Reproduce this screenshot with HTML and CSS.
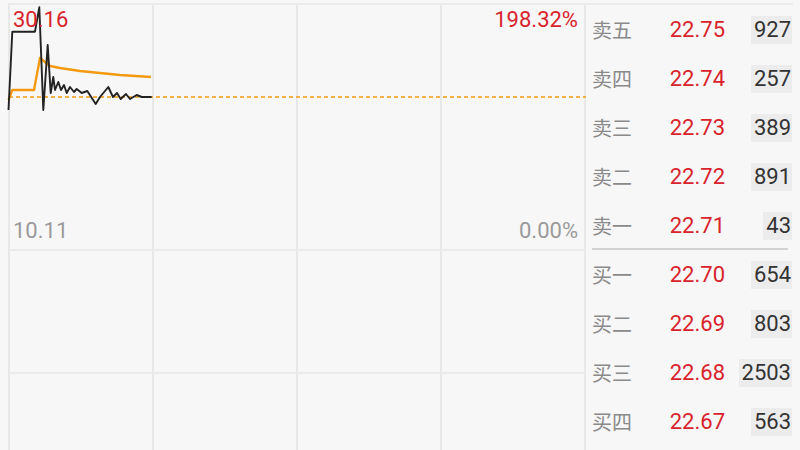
FILE: index.html
```html
<!DOCTYPE html>
<html lang="zh">
<head>
<meta charset="utf-8">
<link rel="stylesheet" href="styles.css">
</head>
<body>
<div class="page">
  <div class="chart">
    <div class="grid">
      <div class="cell price"></div><div class="cell price"></div><div class="cell price"></div><div class="cell price"></div>
      <div class="cell"></div><div class="cell"></div><div class="cell"></div><div class="cell"></div>
      <div class="cell"></div><div class="cell"></div><div class="cell"></div><div class="cell"></div>
    </div>
    <svg class="lines" width="586" height="450" viewBox="0 0 586 450">
      <path class="avg-ref" d="M9,97 H586"/>
      <path class="avg" d="M8.5,100 L12.3,90 L34,90 L40,58 L45,62 L50,66 L60,68 L80,71 L100,73 L120,75 L151,77"/>
      <path class="price-line" d="M8.5,110 L12.3,31.7 L35,31.7 L39.3,7.3 L43.3,110 L47.7,45 L50.7,93 L53.3,77 L55,90 L58.3,82 L61,90 L64,85 L66.7,93 L70,87 L74,92 L76.7,89 L81.7,93 L87.3,91 L95.7,104 L100,97 L108.3,87 L113,97 L117,93 L120.7,99 L126,94 L130,99 L136.7,95 L141.7,97 L151.7,97"/>
    </svg>
    <div class="labels">
      <div class="label-row">
        <span class="red">30.16</span>
        <span class="red">198.32%</span>
      </div>
      <div class="label-row">
        <span class="gray">10.11</span>
        <span class="gray">0.00%</span>
      </div>
    </div>
  </div>
  <div class="book">
    <div class="row"><span class="name">卖五</span><span class="px">22.75</span><span class="vol"><span class="vbox">927</span></span></div>
    <div class="row"><span class="name">卖四</span><span class="px">22.74</span><span class="vol"><span class="vbox">257</span></span></div>
    <div class="row"><span class="name">卖三</span><span class="px">22.73</span><span class="vol"><span class="vbox">389</span></span></div>
    <div class="row"><span class="name">卖二</span><span class="px">22.72</span><span class="vol"><span class="vbox">891</span></span></div>
    <div class="row"><span class="name">卖一</span><span class="px">22.71</span><span class="vol"><span class="vbox">43</span></span></div>
    <div class="divider"></div>
    <div class="row"><span class="name">买一</span><span class="px">22.70</span><span class="vol"><span class="vbox">654</span></span></div>
    <div class="row"><span class="name">买二</span><span class="px">22.69</span><span class="vol"><span class="vbox">803</span></span></div>
    <div class="row"><span class="name">买三</span><span class="px">22.68</span><span class="vol"><span class="vbox">2503</span></span></div>
    <div class="row"><span class="name">买四</span><span class="px">22.67</span><span class="vol"><span class="vbox">563</span></span></div>
  </div>
</div>
</body>
</html>
```

FILE: styles.css
```css
html, body {
  margin: 0;
  padding: 0;
  background: #f7f7f7;
}
body {
  font-family: Roboto, "Noto Sans CJK SC", sans-serif;
  width: 800px;
  height: 450px;
  overflow: hidden;
}
.page {
  display: flex;
  width: 800px;
  height: 450px;
}
.chart {
  position: relative;
  width: 586px;
  height: 450px;
  flex: none;
}
.grid {
  margin: 3px 0 0 8px;
  width: 578px;
  height: 447px;
  box-sizing: border-box;
  border-top: 2px solid #ebebeb;
  border-left: 2px solid #e8e8e8;
  display: grid;
  grid-template-columns: repeat(4, 1fr);
  grid-template-rows: 246px 123px 1fr;
}
.cell {
  border-right: 2px solid #e8e8e8;
  border-bottom: 2px solid #ebebeb;
}
.grid .cell:nth-last-child(-n+4) {
  border-bottom: none;
}
.lines {
  position: absolute;
  left: 0;
  top: 0;
}
.avg-ref {
  fill: none;
  stroke: #f29a0e;
  stroke-width: 1.5;
  stroke-dasharray: 4 3;
}
.avg {
  fill: none;
  stroke: #f39a10;
  stroke-width: 2.4;
  stroke-linejoin: round;
}
.price-line {
  fill: none;
  stroke: #222;
  stroke-width: 1.9;
  stroke-linejoin: round;
}
.labels {
  position: absolute;
  left: 13px;
  top: 7px;
  width: 565px;
  height: 237px;
  display: flex;
  flex-direction: column;
  justify-content: space-between;
}
.label-row {
  display: flex;
  justify-content: space-between;
  font-size: 22px;
  line-height: 26px;
}
.red { color: #d8232c; }
.gray { color: #9a9a9a; }
.book {
  width: 214px;
  flex: none;
  box-sizing: border-box;
  padding: 0 8px 0 6px;
}
.book::before {
  content: "";
  display: block;
  height: 2px;
  margin-top: 3px;
  background: #ebebeb;
  margin-left: -6px;
  margin-right: -1px;
}
.row {
  display: flex;
  align-items: center;
  height: 49px;
  font-size: 22px;
}
.name {
  font-family: "Noto Sans CJK SC", sans-serif;
  font-size: 20px;
  color: #8a8a8a;
  width: 40px;
}
.px {
  flex: 1;
  text-align: right;
  color: #d8232c;
}
.vol {
  width: 67px;
  text-align: right;
  color: #333;
}
.vbox {
  display: inline-block;
  background: #ececec;
  line-height: 28px;
  padding: 0 1px 0 3px;
}
.divider {
  height: 2px;
  margin: -2px 4px 0 0;
  background: #d2d2d2;
}
```
